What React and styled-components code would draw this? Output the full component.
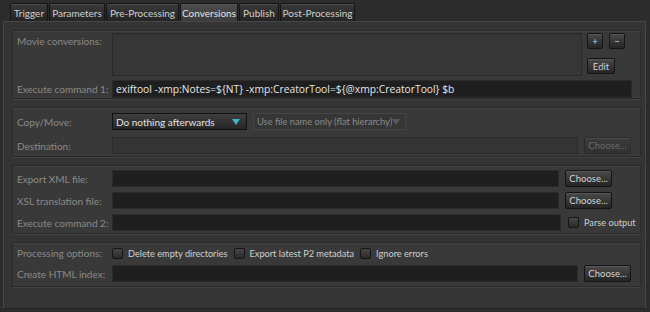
import React from "react";
import styled, { createGlobalStyle } from "styled-components";

const Global = createGlobalStyle`
  html, body {
    margin: 0;
    padding: 0;
    background: #2c2c2c;
  }
  body {
    font-family: Lato, "Liberation Sans", sans-serif;
    font-size: 10px;
  }
`;

const Window = styled.div`
  width: 650px;
  height: 312px;
  box-sizing: border-box;
  padding: 3px 4px 3px 3px;
  display: flex;
  flex-direction: column;
`;

const TabBar = styled.div`
  display: flex;
  padding-left: 7px;
  gap: 1px;
  height: 18px;
`;

const Tab = styled.div`
  width: ${(p) => p.$w}px;
  height: 18px;
  box-sizing: border-box;
  display: flex;
  align-items: center;
  justify-content: center;
  white-space: nowrap;
  border: 1px solid #151515;
  border-bottom: none;
  border-radius: 2px 2px 0 0;
  color: ${(p) => (p.$active ? "#e2e2e2" : "#cfcfcf")};
  background: ${(p) =>
    p.$active
      ? "linear-gradient(#4c4c4c, #3c3c3c)"
      : "linear-gradient(#3a3a3a, #242424)"};
  box-shadow: inset 0 1px 0 rgba(255, 255, 255, 0.08);
`;

const Panel = styled.div`
  flex: 1;
  background: #343434;
  border: 1px solid #474747;
  border-bottom-color: #222;
  box-sizing: border-box;
  padding: 8px 4px 0 8px;
  display: flex;
  flex-direction: column;
  gap: 8px;
`;

const Group = styled.div`
  background: #393939;
  border: 1px solid #2a2a2a;
  box-shadow: 0 1px 0 #424242, inset 0 1px 0 #424242;
  padding: ${(p) => p.$pad || "3px 8px 0 4px"};
  display: grid;
  grid-template-columns: 95px 1fr;
  row-gap: ${(p) => p.$gap || "6px"};
  align-items: center;
`;

const Label = styled.div`
  color: #8a8a8a;
  white-space: nowrap;
  align-self: ${(p) => (p.$top ? "start" : "center")};
  padding-top: ${(p) => (p.$top ? "2px" : "0")};
`;

const Line = styled.div`
  display: flex;
  align-items: center;
  gap: ${(p) => p.$gap || "6px"};
`;

const Field = styled.div`
  flex: 1;
  height: ${(p) => p.$h || "17px"};
  box-sizing: border-box;
  background: ${(p) => (p.$disabled ? "#343434" : "#1f1f1f")};
  border: 1px solid #2b2b2b;
  color: #e6e6e6;
  padding: 0 3px;
  display: flex;
  align-items: center;
  font-family: "Open Sans", "DejaVu Sans", sans-serif;
  font-size: 10.3px;
  white-space: nowrap;
  overflow: hidden;
`;

const ListBox = styled.div`
  flex: 1;
  height: 43px;
  box-sizing: border-box;
  background: #363636;
  border: 1px solid #2a2a2a;
  box-shadow: inset 0 1px 0 #2f2f2f;
`;

const Button = styled.div`
  height: ${(p) => p.$h || "16px"};
  width: ${(p) => p.$w || "47px"};
  box-sizing: border-box;
  border: 1px solid ${(p) => (p.$disabled ? "#2c2c2c" : "#141414")};
  border-radius: 2px;
  background: ${(p) =>
    p.$disabled
      ? "linear-gradient(#3c3c3c, #303030)"
      : "linear-gradient(#4a4a4a, #252525)"};
  box-shadow: inset 0 1px 0 rgba(255, 255, 255, 0.08);
  color: ${(p) => (p.$disabled ? "#6a6a6a" : "#d2d2d2")};
  display: flex;
  align-items: center;
  justify-content: center;
  font-size: 9.5px;
  flex-shrink: 0;
`;

const ButtonColumn = styled.div`
  display: flex;
  flex-direction: column;
  gap: 9px;
  align-self: flex-start;
`;

const ButtonRow = styled.div`
  display: flex;
  gap: 6px;
`;

const Spacer = styled.div`
  width: ${(p) => p.$w}px;
`;

const Select = styled.div`
  width: ${(p) => p.$w};
  height: 17px;
  box-sizing: border-box;
  border: 1px solid ${(p) => (p.$disabled ? "#444" : "#111")};
  background: ${(p) =>
    p.$disabled ? "#363636" : "linear-gradient(#3e3e3e, #262626)"};
  color: ${(p) => (p.$disabled ? "#8a8a8a" : "#e2e2e2")};
  font-size: ${(p) => (p.$disabled ? "9.3px" : "10px")};
  display: flex;
  align-items: center;
  justify-content: space-between;
  padding: 0 6px 0 3px;
  white-space: nowrap;
`;

const Arrow = styled.span`
  width: 0;
  height: 0;
  border-left: 4px solid transparent;
  border-right: 4px solid transparent;
  border-top: 6px solid ${(p) => (p.$disabled ? "#5a5a5a" : "#3fb6d0")};
`;

const Check = styled.span`
  width: 11px;
  height: 11px;
  box-sizing: border-box;
  border: 1px solid #151515;
  border-radius: 2px;
  background: linear-gradient(#474747, #2a2a2a);
  flex-shrink: 0;
`;

const CheckLabel = styled.label`
  display: flex;
  align-items: center;
  gap: 5px;
  color: #cfcfcf;
  font-size: 9.2px;
  white-space: nowrap;
  margin-right: 6px;
`;

const ParseOption = styled(CheckLabel)`
  width: 64px;
  margin-right: -20px;
`;

const tabs = [
  ["Trigger", 38],
  ["Parameters", 56],
  ["Pre-Processing", 73],
  ["Conversions", 58],
  ["Publish", 40],
  ["Post-Processing", 75],
];

export default function App() {
  return (
    <Window>
      <Global />
      <TabBar>
        {tabs.map(([t, w]) => (
          <Tab key={t} $w={w} $active={t === "Conversions"}>{t}</Tab>
        ))}
      </TabBar>
      <Panel>
        <Group $pad="2px 8px 0 4px" $gap="4px">
          <Label $top>Movie conversions:</Label>
          <Line $gap="5px">
            <ListBox />
            <ButtonColumn>
              <ButtonRow>
                <Button $w="16px">+</Button>
                <Button $w="16px">−</Button>
              </ButtonRow>
              <Button $w="28px">Edit</Button>
            </ButtonColumn>
            <Spacer $w={2} />
          </Line>
          <Label>Execute command 1:</Label>
          <Field $h="18px">exiftool -xmp:Notes=${"{NT}"} -xmp:CreatorTool=${"{@xmp:CreatorTool}"} $b</Field>
        </Group>

        <Group $pad="5px 9px 2px 4px" $gap="7px">
          <Label>Copy/Move:</Label>
          <Line>
            <Select $w="135px">Do nothing afterwards<Arrow /></Select>
            <Select $w="153px" $disabled>Use file name only (flat hierarchy)<Arrow $disabled /></Select>
          </Line>
          <Label>Destination:</Label>
          <Line>
            <Field $disabled />
            <Button $disabled $h="17px">Choose...</Button>
          </Line>
        </Group>

        <Group $pad="4px 28px 2px 4px" $gap="5px">
          <Label>Export XML file:</Label>
          <Line>
            <Field />
            <Button $h="17px">Choose...</Button>
          </Line>
          <Label>XSL translation file:</Label>
          <Line>
            <Field />
            <Button $h="17px">Choose...</Button>
          </Line>
          <Label>Execute command 2:</Label>
          <Line $gap="7px">
            <Field />
            <ParseOption><Check />Parse output</ParseOption>
          </Line>
        </Group>

        <Group $pad="4px 9px 4px 4px" $gap="6px">
          <Label>Processing options:</Label>
          <Line $gap="0">
            <CheckLabel><Check />Delete empty directories</CheckLabel>
            <CheckLabel><Check />Export latest P2 metadata</CheckLabel>
            <CheckLabel><Check />Ignore errors</CheckLabel>
          </Line>
          <Label>Create HTML index:</Label>
          <Line>
            <Field />
            <Button $h="17px">Choose...</Button>
          </Line>
        </Group>
      </Panel>
    </Window>
  );
}
